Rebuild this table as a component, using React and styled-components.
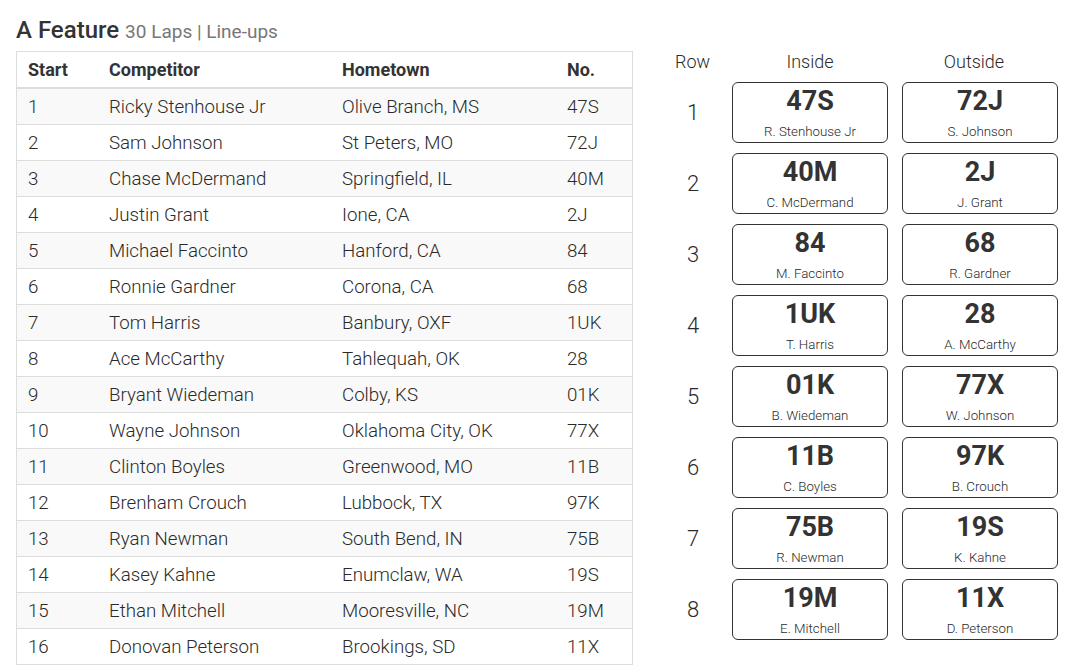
import React from 'react';
import styled, { createGlobalStyle } from 'styled-components';

const drivers = [
  ['Ricky Stenhouse Jr', 'Olive Branch, MS', '47S', 'R. Stenhouse Jr'],
  ['Sam Johnson', 'St Peters, MO', '72J', 'S. Johnson'],
  ['Chase McDermand', 'Springfield, IL', '40M', 'C. McDermand'],
  ['Justin Grant', 'Ione, CA', '2J', 'J. Grant'],
  ['Michael Faccinto', 'Hanford, CA', '84', 'M. Faccinto'],
  ['Ronnie Gardner', 'Corona, CA', '68', 'R. Gardner'],
  ['Tom Harris', 'Banbury, OXF', '1UK', 'T. Harris'],
  ['Ace McCarthy', 'Tahlequah, OK', '28', 'A. McCarthy'],
  ['Bryant Wiedeman', 'Colby, KS', '01K', 'B. Wiedeman'],
  ['Wayne Johnson', 'Oklahoma City, OK', '77X', 'W. Johnson'],
  ['Clinton Boyles', 'Greenwood, MO', '11B', 'C. Boyles'],
  ['Brenham Crouch', 'Lubbock, TX', '97K', 'B. Crouch'],
  ['Ryan Newman', 'South Bend, IN', '75B', 'R. Newman'],
  ['Kasey Kahne', 'Enumclaw, WA', '19S', 'K. Kahne'],
  ['Ethan Mitchell', 'Mooresville, NC', '19M', 'E. Mitchell'],
  ['Donovan Peterson', 'Brookings, SD', '11X', 'D. Peterson'],
];

const GlobalStyle = createGlobalStyle`
  body {
    margin: 0;
    background: #fff;
    font-family: Roboto, "Liberation Sans", sans-serif;
    color: #333;
  }
`;

const Page = styled.div`
  display: flex;
  align-items: flex-start;
  gap: 42px;
  padding: 16px 16px 0;
`;

const Left = styled.div`
  width: 617px;
`;

const Title = styled.h1`
  margin: 0 0 5px;
  font-size: 24px;
  font-weight: 500;
  line-height: 28px;
  color: #333;

  small {
    font-size: 19px;
    font-weight: 400;
    color: #777;
  }
`;

const Table = styled.table`
  width: 100%;
  border-collapse: collapse;
  border: 1px solid #ddd;
  font-size: 18px;

  th {
    height: 35px;
    text-align: left;
    font-weight: 700;
    padding: 0 12px 0 11px;
    border-bottom: 2px solid #ddd;
  }

  td {
    height: 35px;
    padding: 0 12px 0 11px;
    border-top: 1px solid #ddd;
    font-weight: 300;
    font-size: 18.7px;
    color: #2a2a2a;
  }

  tbody tr:nth-child(odd) {
    background: #f9f9f9;
  }
`;

const Right = styled.div`
  display: grid;
  grid-template-columns: 43px 156px 156px;
  column-gap: 14px;
  row-gap: 10px;
  align-items: center;
  margin-top: 35px;
`;

const HeadCell = styled.div`
  font-size: 18px;
  line-height: 22px;
  font-weight: 300;
  color: #2a2a2a;
  margin-bottom: -1px;
  text-align: ${(p) => (p.$row ? 'left' : 'center')};
  padding-right: ${(p) => p.$pad || 0}px;
`;

const RowNum = styled.div`
  font-size: 22px;
  font-weight: 300;
  text-align: center;
  padding-right: 7px;
  color: #2a2a2a;
`;

const Card = styled.div`
  height: 61px;
  box-sizing: border-box;
  border: 1.5px solid #333;
  border-radius: 6px;
  display: flex;
  flex-direction: column;
  align-items: center;
  justify-content: center;
`;

const CarNo = styled.div`
  font-size: 27px;
  font-weight: 700;
  line-height: 30px;
  margin-top: -1px;
  color: #333;
`;

const CardName = styled.div`
  font-size: 13.3px;
  font-weight: 300;
  line-height: 16px;
  margin-top: 8px;
  margin-bottom: -2px;
  color: #2a2a2a;
`;

export default function App() {
  const rows = [];
  for (let i = 0; i < drivers.length; i += 2) rows.push([drivers[i], drivers[i + 1]]);

  return (
    <Page>
      <GlobalStyle />
      <Left>
        <Title>
          A Feature <small>30 Laps | Line-ups</small>
        </Title>
        <Table>
          <thead>
            <tr>
              <th style={{ width: 58 }}>Start</th>
              <th style={{ width: 210 }}>Competitor</th>
              <th style={{ width: 202 }}>Hometown</th>
              <th>No.</th>
            </tr>
          </thead>
          <tbody>
            {drivers.map((d, i) => (
              <tr key={d[2]}>
                <td>{i + 1}</td>
                <td>{d[0]}</td>
                <td>{d[1]}</td>
                <td>{d[2]}</td>
              </tr>
            ))}
          </tbody>
        </Table>
      </Left>
      <Right>
        <HeadCell $row>Row</HeadCell>
        <HeadCell>Inside</HeadCell>
        <HeadCell $pad={12}>Outside</HeadCell>
        {rows.map(([a, b], i) => (
          <React.Fragment key={i}>
            <RowNum>{i + 1}</RowNum>
            <Card>
              <CarNo>{a[2]}</CarNo>
              <CardName>{a[3]}</CardName>
            </Card>
            <Card>
              <CarNo>{b[2]}</CarNo>
              <CardName>{b[3]}</CardName>
            </Card>
          </React.Fragment>
        ))}
      </Right>
    </Page>
  );
}
